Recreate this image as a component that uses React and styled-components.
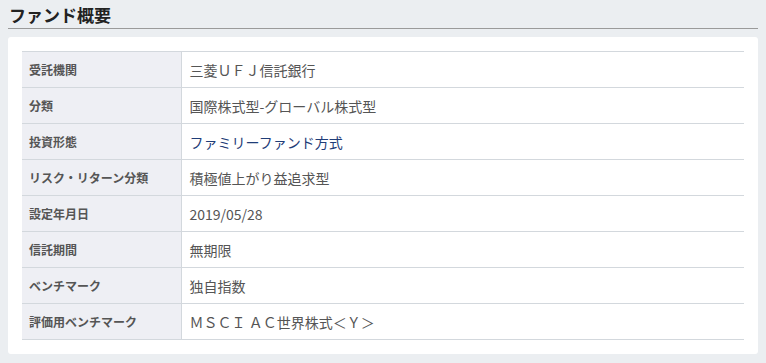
import React from 'react'
import styled, { createGlobalStyle } from 'styled-components'

const Global = createGlobalStyle`
  html, body {
    margin: 0;
    background: #ebeef1;
  }
  body {
    font-family: "Noto Sans CJK JP", "Noto Sans", sans-serif;
    color: #555;
  }
`

const rows = [
  { label: '受託機関', value: '三菱ＵＦＪ信託銀行' },
  { label: '分類', value: '国際株式型-グローバル株式型' },
  { label: '投資形態', value: 'ファミリーファンド方式', link: true },
  { label: 'リスク・リターン分類', value: '積極値上がり益追求型' },
  { label: '設定年月日', value: '2019/05/28' },
  { label: '信託期間', value: '無期限' },
  { label: 'ベンチマーク', value: '独自指数' },
  { label: '評価用ベンチマーク', value: 'ＭＳＣＩ ＡＣ世界株式＜Ｙ＞' },
]

const App = () => {
  return (
    <Page>
      <Global />
      <Title>ファンド概要</Title>
      <Card>
        <Table>
          <tbody>
            {rows.map((r) => (
              <tr key={r.label}>
                <Label>{r.label}</Label>
                <Value $link={r.link}>{r.value}</Value>
              </tr>
            ))}
          </tbody>
        </Table>
      </Card>
    </Page>
  )
}

export default App

const Page = styled.div`
  padding: 0 8px 10px;
`

const Title = styled.h2`
  margin: 0 0 8px;
  padding: 3px 0 1px 1px;
  font-size: 17px;
  line-height: 24px;
  font-weight: 700;
  color: #222;
  border-bottom: 1px solid #9a9a9a;
`

const Card = styled.div`
  background: #fff;
  border-radius: 3px;
  padding: 14px;
`

const Table = styled.table`
  width: 100%;
  border-collapse: collapse;
  border-top: 1px solid #d3d8dd;
  tr {
    border-bottom: 1px solid #d3d8dd;
  }
`

const Label = styled.th`
  width: 159px;
  box-sizing: border-box;
  height: 36px;
  padding: 0 7px;
  background: #eeeff4;
  border-right: 1px solid #d3d8dd;
  text-align: left;
  font-size: 12px;
  font-weight: 700;
  color: #555;
`

const Value = styled.td`
  padding: 0 8px;
  font-size: 14px;
  color: ${(p) => (p.$link ? '#1f3d78' : '#555')};
`
